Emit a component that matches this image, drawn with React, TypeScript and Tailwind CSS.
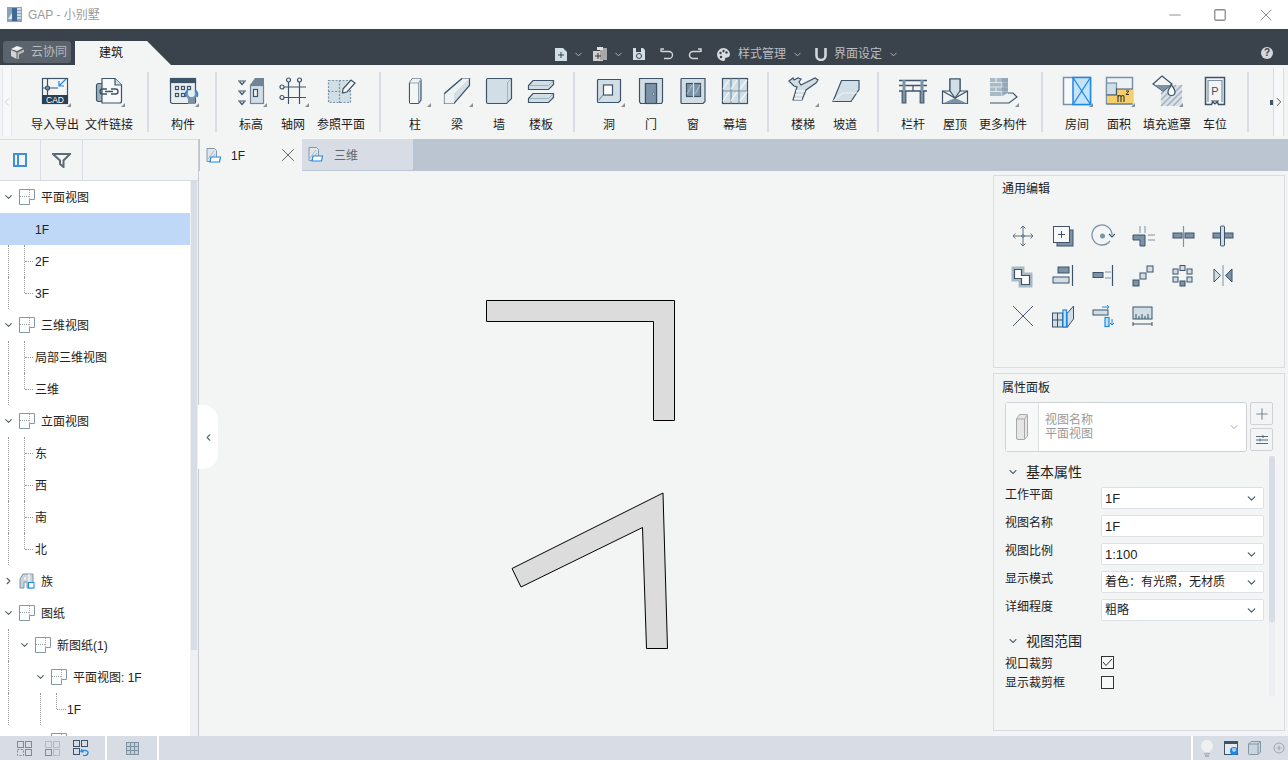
import type { ReactNode } from "react";
import { ChevronDown, ChevronLeft, ChevronRight, Minus, Plus, Square, X } from "lucide-react";

const D = "#3d5468";
const L = "#d2dee5";
const M = "#7b92a7";
const B = "#1e88e5";

function Ico({ children, mark }: { children: ReactNode; mark?: boolean }) {
  return (
    <svg width="30" height="30" viewBox="0 0 30 30" fill="none" stroke={D} strokeWidth="1.2" className="overflow-visible">
      {children}
      {mark && <polygon points="27,31 31,31 31,27" fill="#8a8f96" stroke="none" />}
    </svg>
  );
}

const ribbon: { label: string; wide?: boolean; mark?: boolean; icon: ReactNode }[][] = [
  [
    {
      label: "导入导出", wide: true, mark: true,
      icon: (
        <>
          <rect x="2.5" y="2.5" width="25" height="25" fill="#f3f5f5" />
          <rect x="2" y="19" width="26" height="9" fill="#2c4052" stroke="none" />
          <path d="M7.5 3v16M3 12h15" />
          <circle cx="7.5" cy="12" r="2" fill={M} />
          <path d="M26 3l-7 7M19 5v5h5" stroke={B} strokeWidth="1.2" />
          <text x="15" y="27" textAnchor="middle" fontSize="8.5" fill="#fff" stroke="none">CAD</text>
        </>
      ),
    },
    {
      label: "文件链接", wide: true, mark: true,
      icon: (
        <>
          <rect x="2.5" y="7.5" width="14" height="18" rx="2" fill="#9db0bf" />
          <path d="M8 2.5h13l6.5 6.5v16a2 2 0 0 1-2 2H8z" fill="#f7f9fa" />
          <path d="M21 2.500V9h6.500" fill={L} />
          <path d="M13 13h-4.500a2.500 2.500 0 0 0 0 5H13M17 13h4.500a2.500 2.500 0 0 1 0 5H17M11 15.500h8" strokeWidth="1.400" />
        </>
      ),
    },
  ],
  [
    {
      label: "构件", mark: true,
      icon: (
        <>
          <rect x="2.5" y="2.5" width="25" height="25" rx="2" fill="#e8edf0" />
          <rect x="2.5" y="2.5" width="25" height="4" fill={D} />
          <g fill="#f3f5f5">
            <rect x="7.5" y="10.5" width="3" height="3" /><rect x="13.5" y="10.5" width="3" height="3" /><rect x="19.5" y="10.5" width="3" height="3" />
            <rect x="7.5" y="17.5" width="3" height="3" /><rect x="13.5" y="17.5" width="3" height="3" />
          </g>
          <path d="M20 14v5l2 2h3l2-2v-5l2 2v4l-2 3v5h-7v-5l-2-3v-4z" fill={M} stroke="none" />
          <path d="M20 14a6 6 0 0 0-2 7M27 14a6 6 0 0 1 2 7" stroke={B} strokeWidth="1.6" />
        </>
      ),
    },
  ],
  [
    {
      label: "标高", mark: true,
      icon: (
        <>
          <polygon points="14,9 19,2 28,2 28,9" fill="#6f8496" stroke="none" />
          <rect x="14.5" y="9.5" width="13" height="18" fill={L} stroke="#6f8496" />
          <rect x="17.5" y="13.5" width="4" height="7" fill="#eef2f4" />
          <path d="M2 5h8M2 15h8M2 25h8" />
          <path d="M3.5 5.5l2.5 3 2.5-3M3.5 15.5l2.5 3 2.5-3M3.5 25.5l2.5 3 2.5-3" />
        </>
      ),
    },
    {
      label: "轴网", mark: true,
      icon: (
        <>
          <path d="M10.5 6v22M21.5 6v22M6 11h22M6 21.5h22" />
          <circle cx="10.5" cy="4" r="2" /><circle cx="21.5" cy="4" r="2" /><circle cx="4" cy="11" r="2" /><circle cx="4" cy="21.5" r="2" />
        </>
      ),
    },
    {
      label: "参照平面", wide: true,
      icon: (
        <>
          <rect x="2.5" y="4.5" width="22" height="22" fill={L} stroke={M} strokeDasharray="2 1.5" />
          <path d="M2 15.5h23M13.5 4v23" stroke={M} strokeDasharray="2 1.5" />
          <path d="M17 13l8-9 4 3-8 9-4.5 1z" fill="#f3f5f5" />
        </>
      ),
    },
  ],
  [
    {
      label: "柱", mark: true,
      icon: (
        <>
          <path d="M9.5 7l3-4.5h7a1.5 1.5 0 0 1 1.5 1.500v20l-2.500 3.500H11a1.500 1.500 0 0 1-1.500-1.500z" fill={L} />
          <path d="M9.500 7l3-4.500h7a1.500 1.500 0 0 1 1.500 1.500L18.500 7z" fill="#eef2f4" stroke="none" />
          <rect x="10" y="7" width="8.500" height="20" fill="#f3f6f7" stroke="none" />
          <path d="M9.500 7h9v20.500M18.500 7L21 3" fill="none" stroke={M} strokeWidth=".8" />
        </>
      ),
    },
    {
      label: "梁", mark: true,
      icon: (
        <>
          <polygon points="2.500,17.500 20,2.500 27.500,2.500 27.500,9.500 12,27.500 2.500,27.500" fill={L} />
          <polygon points="2.500,17.500 20,2.500 27.500,2.500 12,17.500" fill="#eef2f4" stroke="none" />
          <polygon points="2.500,17.500 12,17.500 12,27.500 2.500,27.500" fill="#eef2f4" stroke="none" />
          <path d="M2.500 17.500L20 2.500" />
        </>
      ),
    },
    {
      label: "墙",
      icon: (
        <>
          <path d="M4 2.500h23.500v20l-5 5H4a1.500 1.500 0 0 1-1.500-1.500V4A1.500 1.500 0 0 1 4 2.500z" fill={L} />
          <path d="M27.500 2.500l-4 4v21" stroke={M} strokeWidth=".6" />
        </>
      ),
    },
    {
      label: "楼板",
      icon: (
        <>
          <path d="M7 4.500h20.500v4l-5 5H2.500v-4z" fill={L} />
          <path d="M7 17.500h20.500v4l-5 5H2.500v-4z" fill={L} />
          <path d="M3 9.500h19.500l5-5M3 22.500h19.500l5-5" stroke={M} strokeWidth=".6" />
        </>
      ),
    },
  ],
  [
    {
      label: "洞", mark: true,
      icon: (
        <>
          <path d="M4 3.500h22.500v21l-2 2H4.500a1 1 0 0 1-1-1v-21z" fill={L} />
          <rect x="9.500" y="9" width="9" height="10" fill="#fff" stroke={D} strokeWidth="1.200" />
          <path d="M5 24l4-5" stroke={M} />
        </>
      ),
    },
    {
      label: "门",
      icon: (
        <>
          <path d="M3.500 2.500h23v23l-1 2h-5v-20h-11v20h-5l-1-2z" fill={L} />
          <rect x="9.500" y="7.500" width="11" height="20" fill={M} />
          <circle cx="17.500" cy="18" r="1" fill="#fff" stroke={D} strokeWidth=".6" />
        </>
      ),
    },
    {
      label: "窗",
      icon: (
        <>
          <path d="M4 2.500h23v23l-2 2H4a1 1 0 0 1-1-1V3.500a1 1 0 0 1 1-1z" fill={L} />
          <rect x="8.500" y="7.500" width="14" height="13" fill={M} strokeWidth="1.200" />
          <path d="M15.500 7v14" stroke="#dfe7eb" />
          <path d="M9 18l5-9M17 18l5-9" stroke="#a9bac7" />
        </>
      ),
    },
    {
      label: "幕墙",
      icon: (
        <>
          <rect x="2.500" y="2.500" width="25" height="25" fill={L} />
          <path d="M11 2.500v25M19 2.500v25M2.500 15h25" stroke={M} />
          <path d="M3 13l6-9M11 13l6-9M3 25l6-9M11 25l6-9M20 25l7-9M20 13l7-9" stroke="#f3f6f7" strokeWidth="1.300" />
        </>
      ),
    },
  ],
  [
    {
      label: "楼梯", mark: true,
      icon: (
        <>
          <path d="M1 5l4-3 1 2 4-2 3 1-2 3 2 3 14-7 3 2-2 3-10 7-4 10H5l3-10 1-3-3-1z" fill={L} strokeWidth="1.200" />
          <path d="M8 15h9M7 19h8M6 23h8" stroke="#f3f6f7" strokeWidth="1.600" />
        </>
      ),
    },
    {
      label: "坡道",
      icon: (
        <>
          <path d="M11.500 4.500H29v9l-8 12H3z" fill={L} />
          <path d="M3.500 25l9-8H28.500" stroke="#eef2f4" />
        </>
      ),
    },
  ],
  [
    {
      label: "栏杆",
      icon: (
        <>
          <path d="M1 4.500h28M1 9.500h28M1 15h28" strokeWidth="1.300" />
          <path d="M6 4v23M24 4v23" stroke={M} strokeWidth="3" />
          <path d="M4.200 15v12h3.600V15M22.200 15v12h3.600V15" />
          <path d="M15 9.500v5.500" />
        </>
      ),
    },
    {
      label: "屋顶",
      icon: (
        <>
          <polygon points="2.500,15 10,15 10,3 20,3 20,15 27.500,15 27.500,27.500 2.500,27.500" fill="#eef2f4" />
          <polygon points="10,3 20,3 20,15 15,22 10,15" fill={L} />
          <polygon points="2.500,27.500 15,22 27.500,27.500" fill={M} stroke="none" />
          <path d="M2.500 15L15 22 27.500 15" />
        </>
      ),
    },
    {
      label: "更多构件", wide: true, mark: true,
      icon: (
        <>
          <rect x="2" y="2" width="18" height="18" fill="#a9bac7" stroke="none" />
          <path d="M2 6.500h18M2 11h18M2 15.500h18M8 2v4.500M14 6.500V11M8 11v4.500M14 15.500V20" stroke="#dfe7eb" />
          <polygon points="14,2 20,2 20,20 14,20" fill={M} opacity=".5" stroke="none" />
          <polygon points="20,17 24,17 29,21 21,27 2,27 2,20 14,20" fill="#eef2f4" stroke="none" />
          <path d="M2 27h19l8-6-4-4h-5" />
        </>
      ),
    },
  ],
  [
    {
      label: "房间", mark: true,
      icon: (
        <>
          <rect x="1.500" y="1.500" width="27" height="27" fill="#f7f9fa" stroke={M} strokeWidth="1.500" />
          <rect x="11" y="1.500" width="17.500" height="27" fill="#c5e4fb" stroke={B} strokeWidth="1.500" />
          <path d="M11 1.500l17.500 27M28.500 1.500L11 28.500" stroke={B} strokeWidth="1.300" />
        </>
      ),
    },
    {
      label: "面积", mark: true,
      icon: (
        <>
          <rect x="2.500" y="1.500" width="26" height="26" fill="#eef2f4" stroke={M} strokeWidth="1.500" />
          <rect x="2.500" y="7" width="10" height="12" fill={L} stroke={M} />
          <polygon points="3,19 13,19 13,13 29,13 29,28 3,28" fill="#f6cf6d" stroke="none" />
          <path d="M2.500 19h10v-6h16M2.500 28h26" stroke={D} />
          <path d="M14 26v-7m0 2c1-2 3-2 3 0v5m0-5c1-2 3-2 3 0v5" stroke="#333" strokeWidth="1.100" />
          <path d="M22 15h3l-3 3.500h3" stroke="#333" strokeWidth="1" />
        </>
      ),
    },
    {
      label: "填充遮罩", wide: true, mark: true,
      icon: (
        <>
          <rect x="9" y="9" width="21" height="21" fill="#d9e1e7" stroke="none" />
          <path d="M9 18l9-9M9 24l15-15M9 30L30 9M15 30l15-15M21 30l9-9" stroke="#a0b1bf" strokeWidth="1.500" />
          <polygon points="10,0 20,8 11,15 1,8" fill="#f3f5f5" stroke={D} />
          <polygon points="3,9 19,9 11,15 1,8" fill={M} stroke="none" />
          <path d="M19.500 9c-2 3-3.500 5-3.500 7a3.500 3.500 0 0 0 7 0c0-2-1.500-4-3.500-7z" fill="#fff" />
        </>
      ),
    },
    {
      label: "车位",
      icon: (
        <>
          <path d="M5.500 28.500V1.500h19v27h-6l-1-2h-5l-1 2z" fill="#f3f5f5" strokeWidth="1.500" />
          <path d="M8 26V4.500h14V26" stroke={M} />
          <text x="15" y="19" textAnchor="middle" fontSize="11" fill={D} stroke="none">P</text>
          <polygon points="12,25 18,25 15,28" fill={L} />
        </>
      ),
    },
  ],
];

function E({ children }: { children: ReactNode }) {
  return (
    <div className="w-10 h-10 flex items-center justify-center">
      <svg width="24" height="24" viewBox="0 0 24 24" fill="none" stroke={D} strokeWidth="1">{children}</svg>
    </div>
  );
}

const editIcons: ReactNode[] = [
  <g key="m"><path d="M12 2v20M2 12h20M12 2L9.500 4.500M12 2l2.500 2.500M12 22l-2.500-2.500M12 22l2.500-2.500M2 12l2.500-2.500M2 12l2.500 2.500M22 12l-2.500-2.500M22 12l-2.500 2.500" stroke="#5b7085" /><circle cx="12" cy="12" r="1.200" fill="#f3f5f5" /></g>,
  <g key="c"><rect x="6" y="6" width="16" height="16" fill={M} /><rect x="2.500" y="2.500" width="16" height="16" fill="#f7f9fa" /><path d="M10.500 7v7M7 10.500h7" /></g>,
  <g key="r"><path d="M19 17a10 10 0 1 1 2-6" stroke={M} strokeWidth="1.300" /><circle cx="11.500" cy="12" r="2.500" fill={M} stroke="none" /><path d="M18 10l3 3 3-3" strokeWidth="1.200" /></g>,
  <g key="t"><path d="M2 11h12v11H9v-6H2z" fill={M} /><path d="M9 2v7M14 2v7M17 11h7M17 16h7" stroke={M} /></g>,
  <g key="s"><rect x="2" y="9" width="9" height="5" fill={M} /><rect x="14" y="9" width="9" height="5" fill={M} /><path d="M12.500 2v21" stroke={M} strokeWidth="1.200" /></g>,
  <g key="w"><rect x="2" y="9" width="20" height="5" fill={M} /><rect x="9.500" y="2" width="4" height="20" rx="1" fill={L} /></g>,
  <g key="o"><path d="M2 4h10v6h8v12H9v-6H2z" fill="#fff" stroke="#a9bac7" strokeWidth="3" /><path d="M3.500 5.500h7v6h8v9h-8v-6h-7z" fill="#fff" strokeWidth="1.200" /></g>,
  <g key="a"><rect x="7" y="3" width="11" height="6" fill={M} /><rect x="2" y="13" width="16" height="6" fill={L} /><path d="M21.500 1v21" strokeWidth="1.200" /></g>,
  <g key="e"><rect x="2" y="8.500" width="10" height="5" fill={M} /><path d="M14 8h6M14 14h6" stroke={M} /><path d="M21.500 1v21" strokeWidth="1.200" /></g>,
  <g key="l"><rect x="2" y="16" width="6" height="6" fill={M} /><rect x="9" y="9" width="6" height="6" fill={L} /><rect x="16" y="2" width="6" height="6" fill={L} /></g>,
  <g key="k"><rect x="9" y="1.500" width="5" height="5" fill={L} /><rect x="2" y="5" width="5" height="5" fill={L} /><rect x="16" y="5" width="5" height="5" fill={L} /><rect x="2" y="13" width="5" height="5" fill={L} /><rect x="16" y="13" width="5" height="5" fill={L} /><rect x="9" y="17" width="5" height="5" fill={M} /></g>,
  <g key="i"><path d="M12 1v21" stroke={M} /><polygon points="3,5 9.500,11.500 3,18" fill={L} /><polygon points="21,5 14.500,11.500 21,18" fill={M} /></g>,
  <path key="x" d="M2 2l20 20M22 2L2 22" stroke="#4a5a68" />,
  <g key="g"><rect x="1.500" y="9" width="15" height="14" fill={L} /><path d="M1.500 16h15M6.500 9v14M11.500 9v14" /><path d="M16.500 9l6-7v13l-6 8" fill={L} /><rect x="12" y="6" width="3.500" height="17" fill="#c5e4fb" stroke={B} strokeWidth="1.200" /></g>,
  <g key="f"><rect x="2" y="6" width="15" height="5" fill={L} /><path d="M11 3h7M16 1l2 2-2 2" stroke={B} /><rect x="14" y="13.500" width="4" height="9" fill="#c5e4fb" stroke={B} strokeWidth="1.200" /><path d="M21 15v6M19 19l2 2 2-2" stroke={B} /></g>,
  <g key="u"><rect x="2" y="3" width="19" height="12" fill={L} /><path d="M5 15v-5M8 15v-3M11 15v-5M14 15v-3M17 15v-5" /><path d="M2 20h19M2 18v4M21 18v4" /></g>,
];

type Guide = "mid" | "end";
type Row = { label: string; level: 0 | 1 | 2; leaf?: boolean; icon?: "fam"; sel?: boolean; open?: boolean; g8?: boolean; g24?: Guide; g40?: boolean; g56?: Guide; pad?: string };

const rows: Row[] = [
  { label: "平面视图", level: 0, open: true },
  { label: "1F", level: 0, leaf: true, sel: true },
  { label: "2F", level: 0, leaf: true, g8: true, g24: "mid" },
  { label: "3F", level: 0, leaf: true, g8: true, g24: "end" },
  { label: "三维视图", level: 0, open: true },
  { label: "局部三维视图", level: 0, leaf: true, g8: true, g24: "mid" },
  { label: "三维", level: 0, leaf: true, g8: true, g24: "end" },
  { label: "立面视图", level: 0, open: true },
  { label: "东", level: 0, leaf: true, g8: true, g24: "mid" },
  { label: "西", level: 0, leaf: true, g8: true, g24: "mid" },
  { label: "南", level: 0, leaf: true, g8: true, g24: "mid" },
  { label: "北", level: 0, leaf: true, g8: true, g24: "end" },
  { label: "族", level: 0, icon: "fam" },
  { label: "图纸", level: 0, open: true },
  { label: "新图纸(1)", level: 1, open: true, g8: true },
  { label: "平面视图: 1F", level: 2, open: true, g8: true },
  { label: "1F", level: 2, leaf: true, g8: true, g40: true, g56: "end", pad: "pl-[67px]" },
  { label: "", level: 2 },
];

function SheetIcon() {
  return (
    <svg width="16" height="16" viewBox="0 0 16 16" fill="none" className="shrink-0">
      <path d="M.5.500h15v10h-5v5H.500z" fill="#fff" stroke="#8596a6" />
      <path d="M10.500 1v9M1 7.500h9" stroke="#9aa8b4" strokeDasharray="1 1" />
    </svg>
  );
}

function TreeRow({ r }: { r: Row }) {
  const pads = ["pl-[3px]", "pl-[19px]", "pl-[35px]"];
  return (
    <div className={`relative h-8 shrink-0 flex items-center text-[12px] text-[#222] ${r.sel ? "bg-[#bfd8f7]" : ""} ${r.leaf ? r.pad ?? "pl-[35px]" : pads[r.level]}`}>
      {r.g8 && <span className="absolute left-[8px] top-0 h-full border-l border-dotted border-[#999]" />}
      {r.g24 && <span className={`absolute left-[24px] top-0 border-l border-dotted border-[#999] ${r.g24 === "mid" ? "h-full" : "h-1/2"}`} />}
      {r.g24 && <span className="absolute left-[25px] top-1/2 w-[8px] border-t border-dotted border-[#999]" />}
      {r.g40 && <span className="absolute left-[40px] top-0 h-full border-l border-dotted border-[#999]" />}
      {r.g56 && <span className="absolute left-[56px] top-0 h-1/2 border-l border-dotted border-[#999]" />}
      {r.g56 && <span className="absolute left-[57px] top-1/2 w-[9px] border-t border-dotted border-[#999]" />}
      {!r.leaf && (
        <span className="w-[11px] flex justify-center shrink-0 text-[#4f5f6c]">
          {r.label === "" ? null : r.open ? <ChevronDown size={12} strokeWidth={2.4} /> : <ChevronRight size={12} strokeWidth={2.4} />}
        </span>
      )}
      {!r.leaf && (
        <span className="ml-[5px] mr-[6px] w-4 shrink-0">
          {r.icon === "fam" ? (
            <svg width="16" height="16" viewBox="0 0 16 16" fill="none" stroke={M}>
              <path d="M1 15V6l3-5h10v14H8V9H5v6z" fill="#c9d4dc" />
              <path d="M6 4v3M10 1v8" stroke="#f3f5f5" strokeWidth="1.500" />
              <rect x="9.500" y="9.500" width="5.500" height="5.500" fill="#fff" stroke={B} />
            </svg>
          ) : (
            <SheetIcon />
          )}
        </span>
      )}
      <span className="pt-[2px]">{r.label}</span>
    </div>
  );
}

function Field({ value, select = true, latin = false }: { value: string; select?: boolean; latin?: boolean }) {
  return (
    <div className="flex items-center justify-between h-[22px] w-[163px] bg-white border border-[#dde1e5] rounded-[2px] pl-[3px] pr-[5px] text-[#222]">
      <span className={latin ? "text-[13px] pt-[2px]" : "text-[12px]"}>{value}</span>
      {select && <ChevronDown size={13} strokeWidth={2.2} className="text-[#4a5a68]" />}
    </div>
  );
}

function PropLabel({ children }: { children: ReactNode }) {
  return <div className="w-[96px] text-[12px] leading-[14px] text-[#222] -mt-[7px]">{children}</div>;
}

function Section({ title }: { title: string }) {
  return (
    <div className="flex items-center gap-[7px] pl-[2px] text-[#222]">
      <ChevronDown size={12} strokeWidth={2.2} className="text-[#5b6b78]" />
      <span className="text-[14px] leading-[20px]">{title}</span>
    </div>
  );
}

function Sep() {
  return <div className="w-[2px] h-[60px] mt-[7px] bg-[#d8dde5] ml-[11px] mr-[13px] shrink-0" />;
}

function TabIcon() {
  return (
    <svg width="15" height="15" viewBox="0 0 15 15" fill="none">
      <path d="M1 .5h7.500l2 2v11H1z" fill="#dfe6eb" stroke="#8596a6" />
      <path d="M2 11l6-8M4 12l5-6" stroke="#a9bac7" />
      <path d="M5 9h9.500l-1 5H4z" fill="#fff" stroke={B} strokeWidth="1.200" />
    </svg>
  );
}

export default function App() {
  return (
    <div className="w-full h-screen flex flex-col overflow-hidden bg-[#f3f5f5] [font-family:'Liberation_Sans','Noto_Sans_CJK_SC',sans-serif]">
      {/* title bar */}
      <div className="h-[29px] shrink-0 bg-white flex items-center pl-[7px] text-[12px] text-[#9a9a9a]">
        <svg width="15" height="15" viewBox="0 0 15 15">
          <rect width="15" height="15" fill="#8da2b6" />
          <rect x="5" y="1" width="5" height="13" fill="#3f6a93" />
          <path d="M10 2h4M10 5h4M10 8h4M10 11h4" stroke="#e6ebef" strokeWidth="1.500" />
          <path d="M1 12l4-6v6z" fill="#e6ebef" />
        </svg>
        <span className="ml-[6px]">GAP - 小别墅</span>
        <div className="ml-auto flex items-center text-[#8c8c8c]">
          <Minus size={18} strokeWidth={1.3} className="mr-[29px]" />
          <Square size={14} strokeWidth={1.3} absoluteStrokeWidth className="mr-[29px]" />
          <X size={20} strokeWidth={1.2} className="mr-[12px]" />
        </div>
      </div>

      {/* dark menu bar */}
      <div className="h-[36px] shrink-0 bg-[#3a424b] flex items-end pl-[3px] relative">
        <div className="h-[22px] w-[68px] mb-[2px] bg-[#5b636c] rounded-[3px] flex items-center pl-[7px] gap-[6px] text-[12px] text-[#b4bac0]">
          <svg width="15" height="15" viewBox="0 0 15 15">
            <polygon points="1,4 7,1 13,3 7,6" fill="#f0f0f0" />
            <polygon points="1,5 6.500,7.500 6.500,14 1,11" fill="#d4d4d4" />
            <polygon points="7.500,7.500 14,4.500 14,7 9,9.500 9,14 7.500,14" fill="#b9b9b9" />
          </svg>
          云协同
        </div>
        <div className="ml-[4px] h-[24px] w-[96px] bg-[#f3f5f5] flex items-center pl-[24px] text-[12px] text-[#111] [clip-path:polygon(0_0,72px_0,100%_100%,0_100%)]">
          建筑
        </div>
        <div className="absolute left-[555px] top-[18px] h-[14px] flex items-center text-[12px] text-[#b8bec4]">
          <svg width="12" height="13" viewBox="0 0 12 13">
            <path d="M0 0h8l4 4v9H0z" fill="#d2dee5" />
            <path d="M3 7h6M6 4v6" stroke="#3a424b" />
          </svg>
          <ChevronDown size={11} strokeWidth={2} className="ml-[6px] text-[#b8bec4]" />
          <svg width="14" height="14" viewBox="0 0 14 14" className="ml-[9px]" fill="none">
            <rect x="0" y="4" width="10" height="10" fill="#d0d0d0" />
            <rect x="7" y="1" width="7" height="12" fill="#a8a8a8" />
            <rect x="4" y="0" width="6" height="3" fill="#e0e0e0" />
            <path d="M5 6v6M2 9h6" stroke="#333" />
          </svg>
          <ChevronDown size={11} strokeWidth={2} className="ml-[6px]" />
          <svg width="12" height="12" viewBox="0 0 12 12" className="ml-[9px]">
            <path d="M0 0h10l2 2v10H0z" fill="#d2dee5" />
            <rect x="3" y="0" width="5" height="4" fill="#3a424b" />
            <circle cx="6" cy="8" r="2.500" fill="none" stroke="#3a424b" />
          </svg>
          <svg width="14" height="12" viewBox="0 0 14 12" className="ml-[15px]" fill="none" stroke="#d2d6da" strokeWidth="1.300">
            <path d="M4 1H1v3M1.500 3.500H9a3.500 3.500 0 0 1 0 7H4" />
          </svg>
          <svg width="14" height="12" viewBox="0 0 14 12" className="ml-[14px]" fill="none" stroke="#d2d6da" strokeWidth="1.500">
            <path d="M10 1h3v3M12.500 3.500H5a3.500 3.500 0 0 0 0 7h5" />
          </svg>
          <svg width="13" height="13" viewBox="0 0 13 13" className="ml-[15px]">
            <path d="M6.500 0a6.500 6.500 0 1 0 0 13c2 0 1-2 2-3s4 0 4.500-3.500A6.500 6.500 0 0 0 6.500 0z" fill="#d8dce0" />
            <circle cx="3.500" cy="5" r="1.200" fill="#3a424b" /><circle cx="6.500" cy="3" r="1.200" fill="#3a424b" /><circle cx="9.500" cy="4.500" r="1.200" fill="#3a424b" /><circle cx="4" cy="9" r="1.200" fill="#3a424b" />
          </svg>
          <span className="ml-[8px]">样式管理</span>
          <ChevronDown size={11} strokeWidth={2} className="ml-[6px]" />
          <svg width="12" height="13" viewBox="0 0 12 13" className="ml-[12px]" fill="none" stroke="#d2d6da" strokeWidth="2.600">
            <path d="M1.500 0v7.500a4.500 4.500 0 0 0 9 0V0" />
          </svg>
          <span className="ml-[7px]">界面设定</span>
          <ChevronDown size={11} strokeWidth={2} className="ml-[6px]" />
        </div>
        <div className="absolute right-[15px] top-[18px] w-3 h-3 rounded-full bg-[#d2d8de] text-[#3a424b] text-[10px] font-bold leading-3 text-center">?</div>
      </div>

      {/* ribbon */}
      <div className="h-[74px] shrink-0 bg-[#f3f5f5] relative flex pl-[28px]">
        <div className="absolute left-[2px] top-[3px] w-[10px] h-[68px] bg-[#f7f8f9] flex items-center justify-center text-[#c4cad1] border-x border-[#e3e6ea]">
          <ChevronLeft size={14} strokeWidth={1.2} className="shrink-0" />
        </div>
        {ribbon.map((group, gi) => (
          <div key={gi} className="flex">
            {group.map((it) => (
              <div key={it.label} className={`flex flex-col items-center pt-[11px] ${it.wide ? "w-[54px]" : "w-[42px]"}`}>
                <Ico mark={it.mark}>{it.icon}</Ico>
                <span className="mt-[11px] text-[12px] leading-4 text-[#1c1c1c] whitespace-nowrap">{it.label}</span>
              </div>
            ))}
            <Sep />
          </div>
        ))}
        <div className="absolute left-[1270px] top-[35px] w-[3px] h-[5px] bg-[#3d5468]" />
        <div className="absolute left-[1273px] top-[3px] w-[11px] h-[68px] bg-[#f7f8f9] border-x border-[#d8dde5] flex items-center justify-center text-[#222]">
          <ChevronRight size={14} strokeWidth={1.3} className="shrink-0" />
        </div>
      </div>

      {/* body */}
      <div className="flex-1 min-h-0 flex">
        <aside className="w-[199px] shrink-0 flex flex-col border-r border-[#c7ccd3] bg-white">
          <div className="h-[42px] shrink-0 flex bg-[#f3f5f5] border-y border-[#d8dde5]">
            <div className="w-[41px] flex items-center justify-center border-r border-[#d8dde5]">
              <svg width="14" height="14" viewBox="0 0 14 14" fill="none" stroke="#3f8fe0" strokeWidth="2">
                <rect x="1" y="1" width="12" height="12" />
                <path d="M5 1v12" />
              </svg>
            </div>
            <div className="w-[42px] flex items-center justify-center border-r border-[#d8dde5]">
              <svg width="19" height="15" viewBox="0 0 19 15" fill="none" stroke="#5b6b78" strokeWidth="2">
                <path d="M1 1h17l-6.500 6.500V14L8 11V7.500z" />
              </svg>
            </div>
          </div>
          <div className="flex-1 min-h-0 flex overflow-hidden">
            <div className="w-[190px] shrink-0 flex flex-col overflow-hidden">
              {rows.map((r, i) => (
                <TreeRow key={i} r={r} />
              ))}
            </div>
            <div className="w-[8px] flex flex-col bg-[#eef0f3]">
              <div className="mx-[1px] h-[469px] bg-[#d8dde5]" />
            </div>
          </div>
        </aside>

        <main className="flex-1 min-w-0 flex flex-col">
          <div className="h-[32px] shrink-0 flex bg-[#bbc5d2]">
            <div className="w-[102px] ml-px flex items-center pl-[6px] bg-[#f3f5f5] text-[12px] text-[#222]">
              <TabIcon />
              <span className="ml-[10px] pt-[2px]">1F</span>
              <X size={22} strokeWidth={1} className="ml-auto mr-[3px] text-[#555]" />
            </div>
            <div className="w-[111px] mb-[1px] flex items-center pl-[6px] bg-[#d8dde5] text-[12px] text-[#666]">
              <TabIcon />
              <span className="ml-[11px] pt-[2px]">三维</span>
            </div>
          </div>
          <div className="relative flex-1 min-h-0 flex justify-end bg-[#f3f5f5]">
            <svg className="absolute left-0 top-0" width="794" height="565" viewBox="199 171 794 565" fill="#dcdcdc" stroke="#000">
              <polygon points="486.500,300.500 674.500,300.500 674.500,420.500 653.500,420.500 653.500,321.500 486.500,321.500" />
              <polygon points="663,493 667.500,648.500 646.500,648.500 642.500,527.500 521,587 512,568.500" />
            </svg>
            <div className="absolute left-[-1px] top-[234px] w-[20px] h-[64px] bg-white rounded-r-[15px] flex items-center justify-center text-[#5b6b78]">
              <ChevronLeft size={11} strokeWidth={2.500} />
            </div>

            <div className="w-[295px] shrink-0 pr-[3px] pt-[4px] flex flex-col gap-[5px] pb-[5px]">
              <section className="h-[193px] shrink-0 border border-[#d8dde5] px-[8px] pt-[5px]">
                <div className="text-[12px] leading-4 text-[#222]">通用编辑</div>
                <div className="mt-[19px] ml-[1px] grid grid-cols-[repeat(6,40px)]">
                  {editIcons.map((ic, i) => (
                    <E key={i}>{ic}</E>
                  ))}
                </div>
              </section>

              <section className="flex-1 min-h-0 relative border border-[#d8dde5] pl-[11px] pt-[6px]">
                <div className="text-[12px] leading-4 -ml-[3px] text-[#222]">属性面板</div>
                <div className="mt-[6px] flex gap-[3px]">
                  <div className="h-[50px] w-[242px] flex bg-white border border-[#cfd3d7] rounded-[3px]">
                    <div className="w-[33px] flex items-center justify-center border-r border-[#dde0e3] bg-[#f7f8f8]">
                      <svg width="14" height="28" viewBox="0 0 14 28" fill="#e6e6e6" stroke="#a8a8a8">
                        <path d="M1.500 6l3-4.500h7a1 1 0 0 1 1 1V23l-3 3.500H3a1.500 1.500 0 0 1-1.500-1.500z" />
                        <path d="M1.500 6h8v20M9.500 6l3-4.500" fill="none" />
                      </svg>
                    </div>
                    <div className="pl-[6px] pt-[10px] text-[12px] leading-[14px] text-[#9a9a9a]">
                      视图名称
                      <br />
                      平面视图
                    </div>
                    <ChevronDown size={12} strokeWidth={1.800} className="ml-auto mr-[6px] self-center text-[#9aa3ab]" />
                  </div>
                  <div className="flex flex-col gap-[3px]">
                    <div className="w-[23px] h-[23px] flex items-center justify-center bg-[#f3f5f5] border border-[#cfd3d7] rounded-[2px] text-[#7a8a98]">
                      <Plus size={18} strokeWidth={1.500} className="shrink-0" />
                    </div>
                    <div className="w-[23px] h-[23px] flex items-center justify-center bg-[#f3f5f5] border border-[#cfd3d7] rounded-[2px]">
                      <svg width="12" height="10" viewBox="0 0 12 10" stroke="#5b6b78" fill="none">
                        <path d="M0 1.500h12M0 5h12M0 8.500h12M7 0v3M4 3.500v3" />
                      </svg>
                    </div>
                  </div>
                </div>

                <div className="mt-[10px]">
                  <Section title="基本属性" />
                </div>
                <div className="mt-[5px] flex flex-col gap-[6px]">
                  {[
                    ["工作平面", "1F", true, true],
                    ["视图名称", "1F", false, true],
                    ["视图比例", "1:100", true, true],
                    ["显示模式", "着色：有光照，无材质", true, false],
                    ["详细程度", "粗略", true, false],
                  ].map(([k, v, s, l]) => (
                    <div key={k as string} className="flex items-center h-[22px]">
                      <PropLabel>{k as string}</PropLabel>
                      <Field value={v as string} select={s as boolean} latin={l as boolean} />
                    </div>
                  ))}
                </div>

                <div className="mt-[10px]">
                  <Section title="视图范围" />
                </div>
                <div className="mt-[5px] flex items-center h-[13px]">
                  <div className="w-[96px] text-[12px] leading-[14px] pt-[2px] text-[#222]">视口裁剪</div>
                  <div className="w-[13px] h-[13px] border border-[#333] bg-[#f7f8f8] flex items-center justify-center">
                    <svg width="11" height="9" viewBox="0 0 11 9" fill="none" stroke="#333" strokeWidth="1"><path d="M1 4l3 3.500L10 1" /></svg>
                  </div>
                </div>
                <div className="mt-[7px] flex items-center h-[13px]">
                  <div className="w-[96px] text-[12px] leading-[14px] text-[#222]">显示裁剪框</div>
                  <div className="w-[13px] h-[13px] border border-[#333] bg-[#f7f8f8]" />
                </div>

                <div className="absolute left-[275px] top-[82px] w-[6px] h-[240px] bg-[#eceff2]">
                  <div className="h-[166px] bg-[#d8dde5] rounded-[2px]" />
                </div>
              </section>
            </div>
          </div>
        </main>
      </div>

      {/* status bar */}
      <div className="h-[24px] shrink-0 bg-[#d8dde5] flex items-center pl-[17px]">
        <svg width="15" height="15" viewBox="0 0 15 15" fill="none" stroke="#7f8b96">
          <rect x=".5" y=".5" width="6" height="6" /><rect x="8.500" y=".5" width="6" height="6" />
          <rect x=".5" y="8.500" width="6" height="6" strokeDasharray="2 1.500" /><rect x="8.500" y="8.500" width="6" height="6" />
        </svg>
        <svg width="15" height="15" viewBox="0 0 15 15" fill="none" stroke="#b4bac1" className="ml-[13px]">
          <rect x=".5" y=".5" width="6" height="6" /><rect x="8.500" y=".5" width="6" height="6" />
          <rect x=".5" y="8.500" width="6" height="6" stroke="#7f8b96" /><rect x="8.500" y="8.500" width="6" height="6" />
        </svg>
        <svg width="16" height="16" viewBox="0 0 16 16" fill="none" stroke={D} className="ml-[13px]">
          <rect x=".5" y=".5" width="6" height="6" /><rect x="8.500" y=".5" width="6" height="6" />
          <rect x=".5" y="8.500" width="6" height="6" />
          <path d="M9 9l-1 2.500 2.500 .5M8.500 11.500c3-2 7-1 6.500 1.500s-3 3-5 2.500" stroke={B} strokeWidth="1.300" />
        </svg>
        <div className="ml-[16px] w-[2px] h-[24px] bg-white" />
        <svg width="13" height="13" viewBox="0 0 13 13" fill="#c4d0d8" stroke="#7f92a2" className="ml-[19px]">
          <rect x=".5" y=".5" width="12" height="12" />
          <path d="M.5 4.500h12M.5 8.500h12M4.500 .5v12M8.500 .5v12" fill="none" />
        </svg>
        <div className="ml-[18px] w-[2px] h-[24px] bg-white" />

        <div className="ml-auto w-[2px] h-[24px] bg-white" />
        <svg width="12" height="17" viewBox="0 0 12 17" className="ml-[8px]">
          <path d="M6 0a6 6 0 0 0-3.500 10.800V12h7v-1.200A6 6 0 0 0 6 0z" fill="#eef0f2" />
          <path d="M3 13h6v1.500H3zM4 15h4v2H4z" fill="#aab3bb" />
        </svg>
        <svg width="14" height="14" viewBox="0 0 14 14" fill="none" className="ml-[11px]">
          <rect x=".5" y=".5" width="13" height="13" fill="#e6eaee" stroke={D} />
          <rect x="0" y="0" width="14" height="3" fill={D} />
          <circle cx="10" cy="10" r="4" fill={B} />
          <path d="M9 7v3h2V7" stroke="#fff" />
        </svg>
        <svg width="13" height="14" viewBox="0 0 13 14" fill="#c9d5dd" stroke="#8596a6" className="ml-[10px]">
          <path d="M3 .5h9.500V11L10 13.500H1.500a1 1 0 0 1-1-1V3z" />
          <path d="M.5 3H10v10.500M10 3l2.500-2.500" fill="none" />
        </svg>
        <svg width="12" height="12" viewBox="0 0 12 12" fill="none" stroke="#9aa5af" className="ml-[12px] mr-[3px]">
          <circle cx="6" cy="6" r="5" />
          <path d="M6 3.500v5M3.500 6h5" />
        </svg>
      </div>
    </div>
  );
}
